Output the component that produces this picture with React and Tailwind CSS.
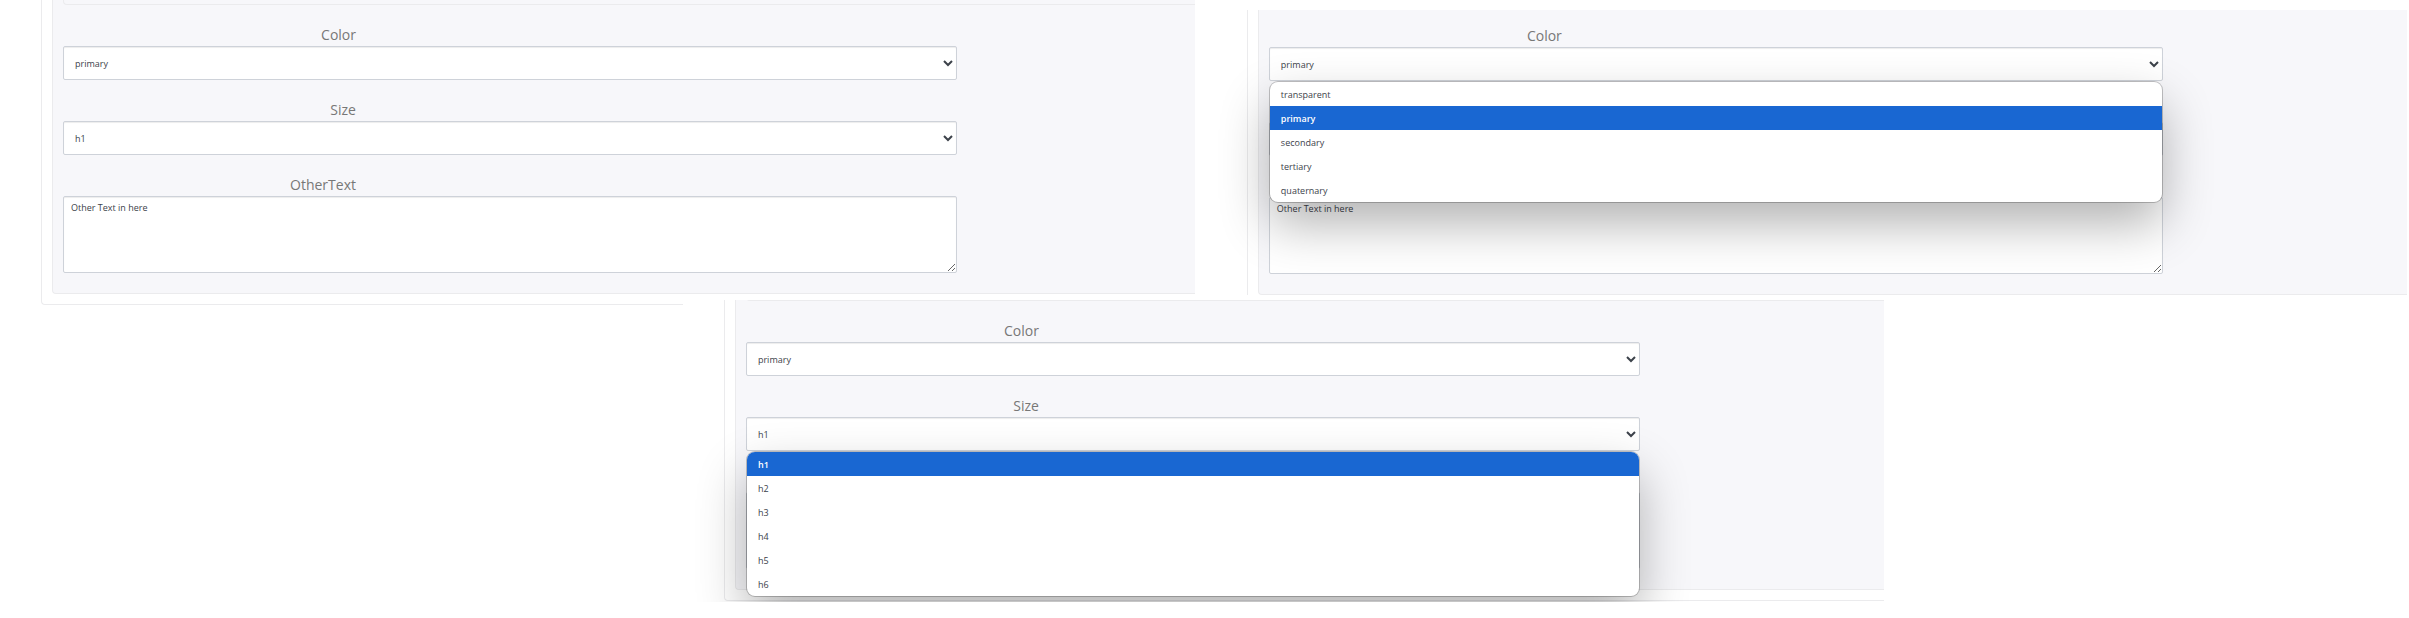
import React, { useId } from "react";

const COLORS = ["transparent", "primary", "secondary", "tertiary", "quaternary"];
const SIZES = ["h1", "h2", "h3", "h4", "h5", "h6"];

const controlClass =
  "block w-full rounded-xs border border-[#ced2d9] bg-white text-[9px] text-[#3c424a] shadow-[inset_0_1px_1px_rgba(0,0,0,0.075)]";

function Field({ id, label, children }) {
  return (
    <div className="w-full max-w-[894px]">
      <label htmlFor={id} className="block w-1/3 pr-[5px] text-right text-sm leading-[22px] text-[#777777]">
        {label}
      </label>
      {children}
    </div>
  );
}

function OptionList({ options, value }) {
  return (
    <ul
      role="listbox"
      className="absolute inset-x-px top-full z-10 mt-px overflow-hidden rounded-lg bg-white text-[9px] text-[#3c424a] shadow-[0_0_0_1px_rgba(0,0,0,0.22),0_22px_50px_rgba(0,0,0,0.3)]"
    >
      {options.map((option) => (
        <li
          key={option}
          role="option"
          aria-selected={option === value}
          className={
            option === value
              ? "flex h-6 items-center bg-[#1967d2] px-[11px] pt-px font-semibold text-white"
              : "flex h-6 items-center px-[11px] pt-px"
          }
        >
          {option}
        </li>
      ))}
    </ul>
  );
}

function SelectField({ label, options, value, open }) {
  const id = useId();
  return (
    <Field id={id} label={label}>
      <div className="relative">
        <select id={id} defaultValue={value} className={`${controlClass} h-[34px] px-[7px]`}>
          {options.map((option) => (
            <option key={option}>{option}</option>
          ))}
        </select>
        {open && <OptionList options={options} value={value} />}
      </div>
    </Field>
  );
}

function TextField({ label, value }) {
  const id = useId();
  return (
    <Field id={id} label={label}>
      <textarea id={id} defaultValue={value} className={`${controlClass} h-[77px] px-[7px] py-1 leading-[14px]`} />
    </Field>
  );
}

function Editor({ open }) {
  return (
    <div className="ml-[41px] rounded-bl-sm border-b border-l border-[#ebebed] pb-2.5 pl-2.5">
      <div className="rounded-bl-sm border-b border-l border-[#ebebed] bg-[#f7f7fa] pb-5 pl-2.5">
        <div className="h-[5px] rounded-bl-sm border-b border-l border-[#ebebed]" />
        <div className="flex flex-col gap-[19px] pt-[19px]">
          <SelectField label="Color" options={COLORS} value="primary" open={open === "color"} />
          <SelectField label="Size" options={SIZES} value="h1" open={open === "size"} />
          <TextField label="OtherText" value="Other Text in here" />
        </div>
      </div>
    </div>
  );
}

export default function App() {
  return (
    <main className="bg-white pb-4 font-['Open_Sans',sans-serif]">
      <div className="flex items-start gap-[11px]">
        <section className="w-[49.6%]">
          <Editor />
        </section>
        <section className="mt-2.5 mr-0.5 h-[285px] flex-1 overflow-hidden">
          <div className="-mt-[9px]">
            <Editor open="color" />
          </div>
        </section>
      </div>
      <section className="relative -mt-[5px] ml-[28.35%] h-[302px] w-[49.86%] overflow-hidden bg-white">
        <div className="-mt-1">
          <Editor open="size" />
        </div>
      </section>
    </main>
  );
}
